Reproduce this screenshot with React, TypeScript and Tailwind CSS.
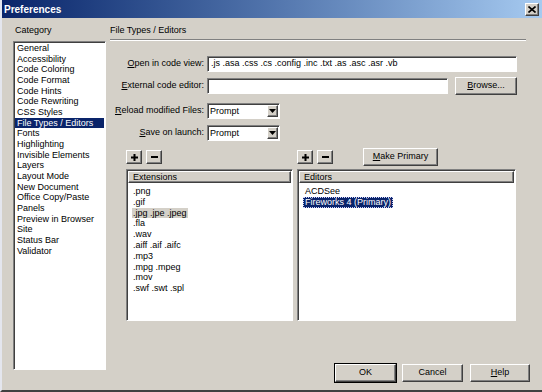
const categories = [
  'General',
  'Accessibility',
  'Code Coloring',
  'Code Format',
  'Code Hints',
  'Code Rewriting',
  'CSS Styles',
  'File Types / Editors',
  'Fonts',
  'Highlighting',
  'Invisible Elements',
  'Layers',
  'Layout Mode',
  'New Document',
  'Office Copy/Paste',
  'Panels',
  'Preview in Browser',
  'Site',
  'Status Bar',
  'Validator',
];

const extensions = [
  '.png',
  '.gif',
  '.jpg .jpe .jpeg',
  '.fla',
  '.wav',
  '.aiff .aif .aifc',
  '.mp3',
  '.mpg .mpeg',
  '.mov',
  '.swf .swt .spl',
];

const raised =
  'bg-[#d4d0c8] border border-t-white border-l-white border-r-[#404040] border-b-[#404040] shadow-[inset_-1px_-1px_0_#808080]';
const sunken =
  'border border-t-[#808080] border-l-[#808080] border-r-white border-b-white shadow-[inset_1px_1px_0_#404040]';

function Btn({ children, className = '' }: { children: React.ReactNode; className?: string }) {
  return <div className={`flex items-center justify-center ${raised} ${className}`}>{children}</div>;
}

function Select({ value }: { value: string }) {
  return (
    <div className={`flex h-[16px] w-[73px] items-stretch bg-white ${sunken} p-[1px] pl-[2px]`}>
      <span className="flex-1 leading-[12px]">{value}</span>
      <div className={`flex w-[11px] items-center justify-center ${raised}`}>
        <svg width="7" height="4" viewBox="0 0 7 4">
          <path d="M0 0h7L3.5 4z" fill="#000" />
        </svg>
      </div>
    </div>
  );
}

function ListHeader({ label }: { label: string }) {
  return (
    <div className={`h-[12px] pl-[4px] leading-[10px] ${raised}`}>{label}</div>
  );
}

function Plus() {
  return (
    <svg width="7" height="7" viewBox="0 0 7 7">
      <path d="M2.5 0h2v2.5H7v2H4.5V7h-2V4.5H0v-2h2.5z" fill="#000" />
    </svg>
  );
}

function Minus() {
  return (
    <svg width="7" height="2" viewBox="0 0 7 2">
      <rect width="7" height="2" fill="#000" />
    </svg>
  );
}

export default function App() {
  return (
    <div className="flex h-[392px] w-[542px] flex-col overflow-hidden border-b-2 border-l-2 border-b-[#404040] border-l-[#e4e6ee] bg-[#d4d0c8] font-['Liberation_Sans',Arial,sans-serif] text-[9px] text-black">
      {/* title bar */}
      <div className="flex h-[18px] items-center bg-gradient-to-r from-[#0a246a] to-[#a6caf0] pl-[2px] pr-[3px]">
        <span className="flex-1 text-[10px] font-bold text-white">Preferences</span>
        <Btn className="h-[13px] w-[14px]">
          <svg width="8" height="7" viewBox="0 0 8 7">
            <path d="M0.5 0.5l7 6M7.5 0.5l-7 6" stroke="#000" strokeWidth="1.6" />
          </svg>
        </Btn>
      </div>

      <div className="flex flex-1 pl-[11px]">
        {/* category column */}
        <div className="flex w-[93px] flex-col">
          <div className="h-[23px] pl-[2px] pt-[7px] leading-[11px]">Category</div>
          <div className={`h-[329px] bg-white ${sunken} px-[1px] pt-[1px]`}>
            {categories.map((c) => (
              <div
                key={c}
                className={`pl-[2px] leading-[10.67px] ${c === 'File Types / Editors' ? 'bg-[#0a246a] text-white' : ''}`}
              >
                {c}
              </div>
            ))}
          </div>
        </div>

        {/* right column */}
        <div className="ml-[4px] flex w-[422px] flex-col">
          <div className="pt-[7px] leading-[11px]">File Types / Editors</div>
          <div className="mt-[3px] w-[416px] border-b border-t border-b-white border-t-[#808080]" />

          <div className="mt-[15px] flex items-center">
            <div className="w-[94px] text-right">
              <span className="underline">O</span>pen in code view:
            </div>
            <div className={`ml-[3px] h-[16px] w-[310px] bg-white pl-[3px] leading-[13px] ${sunken}`}>
              .js .asa .css .cs .config .inc .txt .as .asc .asr .vb
            </div>
          </div>

          <div className="mt-[5px] flex h-[18px] items-center">
            <div className="w-[94px] text-right">
              <span className="underline">E</span>xternal code editor:
            </div>
            <div className={`ml-[3px] h-[16px] w-[241px] bg-white ${sunken}`} />
            <Btn className="ml-[7px] h-[18px] w-[62px]">
              <span>
                <span className="underline">B</span>rowse...
              </span>
            </Btn>
          </div>

          <div className="mt-[8px] flex items-center">
            <div className="w-[94px] text-right">
              <span className="underline">R</span>eload modified Files:
            </div>
            <div className="ml-[3px]">
              <Select value="Prompt" />
            </div>
          </div>

          <div className="mt-[6px] flex items-center">
            <div className="w-[94px] text-right">
              <span className="underline">S</span>ave on launch:
            </div>
            <div className="ml-[3px]">
              <Select value="Prompt" />
            </div>
          </div>

          <div className="mt-[7px] flex h-[18px] items-center pl-[16px]">
            <div className="flex w-[171px] gap-[4px]">
              <Btn className="h-[14px] w-[16px]">
                <Plus />
              </Btn>
              <Btn className="h-[14px] w-[16px]">
                <Minus />
              </Btn>
            </div>
            <div className="flex gap-[4px]">
              <Btn className="h-[14px] w-[16px]">
                <Plus />
              </Btn>
              <Btn className="h-[14px] w-[16px]">
                <Minus />
              </Btn>
            </div>
            <Btn className="ml-[30px] h-[18px] w-[75px]">
              <span>
                <span className="underline">M</span>ake Primary
              </span>
            </Btn>
          </div>

          <div className="mt-[3px] flex gap-[4px] pl-[16px]">
            <div className={`h-[152px] w-[167px] bg-white ${sunken} p-[1px]`}>
              <ListHeader label="Extensions" />
              <div className="pl-[4px] pt-[3px]">
                {extensions.map((e) => (
                  <div key={e} className="flex">
                    <span className={`px-[1px] leading-[10.8px] ${e === '.jpg .jpe .jpeg' ? 'bg-[#d4d0c8]' : ''}`}>{e}</span>
                  </div>
                ))}
              </div>
            </div>
            <div className={`h-[152px] w-[219px] bg-white ${sunken} p-[1px]`}>
              <ListHeader label="Editors" />
              <div className="pl-[4px] pt-[3px]">
                <div className="flex">
                  <span className="border border-transparent px-[1px] leading-[8.8px]">ACDSee</span>
                </div>
                <div className="flex">
                  <span className="border border-dotted border-[#d0d4ff] bg-[#0a246a] px-[1px] leading-[8.8px] text-white">
                    Fireworks 4 (Primary)
                  </span>
                </div>
              </div>
            </div>
          </div>

          <div className="mt-[43px] flex gap-[6px] pl-[225px]">
            <Btn className="h-[18px] w-[61px] outline outline-1 outline-black">OK</Btn>
            <Btn className="h-[18px] w-[61px]">Cancel</Btn>
            <Btn className="ml-[1px] h-[18px] w-[60px]">
              <span>
                <span className="underline">H</span>elp
              </span>
            </Btn>
          </div>
        </div>
      </div>
    </div>
  );
}
